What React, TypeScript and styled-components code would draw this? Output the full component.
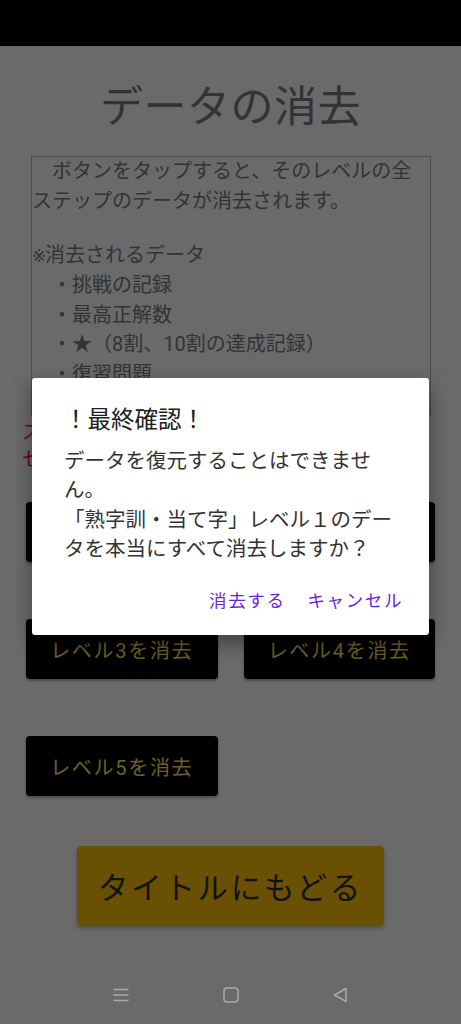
import React from "react";
import styled, { createGlobalStyle } from "styled-components";

const GlobalStyle = createGlobalStyle`
  html, body {
    margin: 0;
    padding: 0;
    background: #000;
  }
  * { box-sizing: border-box; }
`;

const FONT = `Roboto, "Noto Sans CJK JP", "Noto Sans", sans-serif`;

const Screen = styled.div`
  width: 461px;
  height: 1024px;
  display: flex;
  flex-direction: column;
  font-family: ${FONT};
  overflow: hidden;
`;

const StatusBar = styled.div`
  height: 46px;
  flex: none;
  background: #000;
`;

const Main = styled.div`
  position: relative;
  flex: 1;
  background: #fff;
  overflow: hidden;
`;

const Page = styled.div`
  display: flex;
  flex-direction: column;
`;

const Title = styled.h1`
  margin: 32px 0 0;
  font-weight: 400;
  font-size: 43px;
  line-height: 58px;
  color: #7c7c7c;
  text-align: center;
  letter-spacing: 0.5px;
`;

const InfoBox = styled.div`
  margin: 20px 0 0 31px;
  width: 400px;
  height: 260px;
  border: 1px solid #b8b8b8;
  overflow: hidden;
  font-size: 20px;
  line-height: 29.5px;
  color: #7c7c7c;
  white-space: pre-wrap;
`;

const InfoBlock = styled.div<{ $gap?: number }>`
  margin-top: ${(p) => p.$gap ?? 0}px;
`;

const Mark = styled.span`
  font-family: "DejaVu Sans", sans-serif;
  font-size: 17px;
  display: inline-block;
  width: 13px;
  overflow: visible;
  vertical-align: 0;
`;

const Warning = styled.p`
  margin: 3px 0 0;
  padding-left: 22px;
  font-size: 19px;
  line-height: 27px;
  color: #f0105a;
  white-space: nowrap;
`;

const LevelGrid = styled.div`
  margin-top: 29px;
  padding: 0 26px;
  display: grid;
  grid-template-columns: 1fr 1fr;
  column-gap: 26px;
  row-gap: 57px;
`;

const LevelButton = styled.button`
  height: 60px;
  border: none;
  border-radius: 4px;
  background: #000;
  color: #ffe45c;
  font-family: ${FONT};
  font-size: 20px;
  letter-spacing: 1.7px;
  box-shadow: 0 2px 3px rgba(0, 0, 0, 0.3);
  padding: 0;
`;

const BackButton = styled.button`
  align-self: center;
  margin-top: 50px;
  width: 307px;
  height: 79px;
  border: none;
  border-radius: 4px;
  background: #ffc107;
  color: #2e2e2e;
  font-family: ${FONT};
  font-size: 30.5px;
  letter-spacing: 2.7px;
  box-shadow: 0 3px 4px rgba(0, 0, 0, 0.3);
`;

const Scrim = styled.div`
  position: absolute;
  inset: 0;
  background: rgba(0, 0, 0, 0.585);
  display: flex;
  align-items: center;
  justify-content: center;
`;

const Dialog = styled.div`
  width: 397px;
  background: #fff;
  border-radius: 3px;
  box-shadow: 0 8px 20px rgba(0, 0, 0, 0.4);
  display: flex;
  flex-direction: column;
`;

const DialogTitle = styled.h2`
  margin: 0;
  padding: 26px 32px 0;
  font-weight: 400;
  font-size: 23.5px;
  line-height: 32px;
  color: #202020;
`;

const DialogMessage = styled.p`
  margin: 11px 0 0;
  padding: 0 32px;
  font-size: 20.5px;
  line-height: 29.5px;
  color: #333;
  line-break: strict;
`;

const DialogActions = styled.div`
  display: flex;
  justify-content: flex-end;
  gap: 6px;
  padding: 17px 18px 17px;
`;

const TextButton = styled.button`
  height: 36px;
  padding: 0 8px;
  border: none;
  background: transparent;
  color: #6a1fe0;
  font-family: ${FONT};
  font-size: 17.5px;
  letter-spacing: 1.6px;
`;

const NavBar = styled.div`
  height: 58px;
  flex: none;
  background: #6a6a6a;
  display: grid;
  grid-template-columns: repeat(3, 110px);
  justify-content: center;
  align-items: center;
  justify-items: center;
`;

const NavIcon = styled.svg`
  width: 20px;
  height: 20px;
  display: block;
`;

const items = ["挑戦の記録", "最高正解数", "★（8割、10割の達成記録）", "復習問題", "苦手な問題"];

export default function App() {
  const levels = [1, 2, 3, 4, 5];
  return (
    <>
      <GlobalStyle />
      <Screen>
        <StatusBar />
        <Main>
          <Page>
            <Title>データの消去</Title>
            <InfoBox>
              <InfoBlock>　ボタンをタップすると、そのレベルの全ステップのデータが消去されます。</InfoBlock>
              <InfoBlock $gap={24.5}>
                <Mark>※</Mark>消去されるデータ
              </InfoBlock>
              {items.map((t) => (
                <InfoBlock key={t}>　・{t}</InfoBlock>
              ))}
            </InfoBox>
            <Warning>
              ステップごとのデータ消去は、各ステップの
              <br />
              セレクト画面から行ってください。
            </Warning>
            <LevelGrid>
              {levels.map((lv) => (
                <LevelButton key={lv}>レベル{lv}を消去</LevelButton>
              ))}
            </LevelGrid>
            <BackButton>タイトルにもどる</BackButton>
          </Page>
          <Scrim>
            <Dialog>
              <DialogTitle>！最終確認！</DialogTitle>
              <DialogMessage>
                データを復元することはできません。
                <br />
                「熟字訓・当て字」レベル１のデータを本当にすべて消去しますか？
              </DialogMessage>
              <DialogActions>
                <TextButton>消去する</TextButton>
                <TextButton>キャンセル</TextButton>
              </DialogActions>
            </Dialog>
          </Scrim>
        </Main>
        <NavBar>
          <NavIcon viewBox="0 0 20 20" fill="none" stroke="#a9a9a9" strokeWidth="1.4">
            <path d="M2.5 4.5h15M2.5 10h15M2.5 15.5h15" />
          </NavIcon>
          <NavIcon viewBox="0 0 20 20" fill="none" stroke="#a9a9a9" strokeWidth="1.5">
            <rect x="3" y="3" width="14" height="14" rx="3" />
          </NavIcon>
          <NavIcon viewBox="0 0 20 20" fill="none" stroke="#a9a9a9" strokeWidth="1.5" strokeLinejoin="round">
            <path d="M15 3.5v13L3.5 10z" />
          </NavIcon>
        </NavBar>
      </Screen>
    </>
  );
}
